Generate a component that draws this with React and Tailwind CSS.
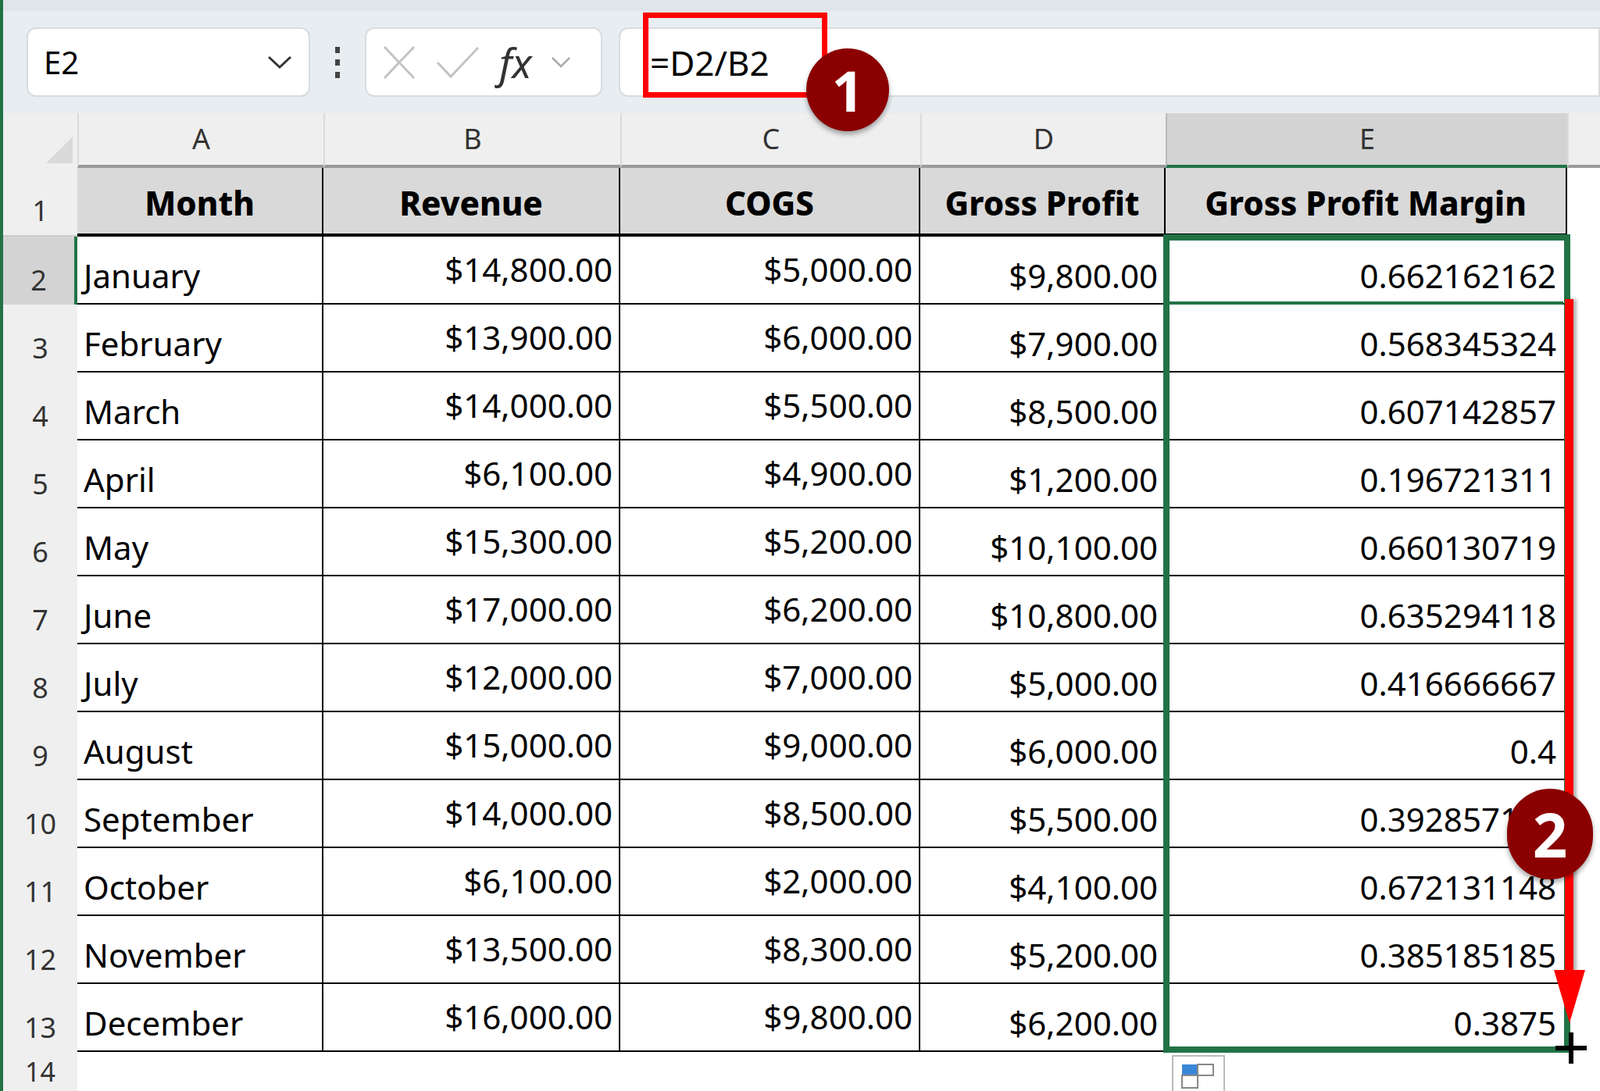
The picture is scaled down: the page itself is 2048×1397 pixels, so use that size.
const rows = [
  ["January", "$14,800.00", "$5,000.00", "$9,800.00", "0.662162162"],
  ["February", "$13,900.00", "$6,000.00", "$7,900.00", "0.568345324"],
  ["March", "$14,000.00", "$5,500.00", "$8,500.00", "0.607142857"],
  ["April", "$6,100.00", "$4,900.00", "$1,200.00", "0.196721311"],
  ["May", "$15,300.00", "$5,200.00", "$10,100.00", "0.660130719"],
  ["June", "$17,000.00", "$6,200.00", "$10,800.00", "0.635294118"],
  ["July", "$12,000.00", "$7,000.00", "$5,000.00", "0.416666667"],
  ["August", "$15,000.00", "$9,000.00", "$6,000.00", "0.4"],
  ["September", "$14,000.00", "$8,500.00", "$5,500.00", "0.392857143"],
  ["October", "$6,100.00", "$2,000.00", "$4,100.00", "0.672131148"],
  ["November", "$13,500.00", "$8,300.00", "$5,200.00", "0.385185185"],
  ["December", "$16,000.00", "$9,800.00", "$6,200.00", "0.3875"],
];

const cols = "grid grid-cols-[95px_315px_380px_384px_314px_514px_46px]";

export default function App() {
  return (
    <div className="relative w-[2048px] h-[1397px] overflow-hidden bg-white font-['Open_Sans',sans-serif] text-black border-l-4 border-[#217346]">
      {/* formula bar */}
      <div className="h-[145px] bg-[#e8edf1] border-t-[14px] border-[#dfe5ea] flex items-center pl-[30px]">
        <div className="w-[363px] h-[89px] bg-white rounded-xl border-2 border-[#d8dcdf] flex items-center justify-between px-5">
          <span className="text-[40px] font-['Liberation_Sans',sans-serif]">E2</span>
          <svg width="34" height="20" viewBox="0 0 34 20"><path d="M3 3 L17 16 L31 3" fill="none" stroke="#333" strokeWidth="3" /></svg>
        </div>
        <div className="w-[8px] mx-[31px] flex flex-col gap-2 items-center">
          <span className="w-[6px] h-[8px] bg-[#444]" />
          <span className="w-[6px] h-[8px] bg-[#444]" />
          <span className="w-[6px] h-[8px] bg-[#444]" />
        </div>
        <div className="w-[304px] h-[89px] bg-white rounded-xl border-2 border-[#d8dcdf] flex items-center gap-6 px-5">
          <svg width="44" height="46" viewBox="0 0 44 46"><path d="M3 3 L41 43 M41 3 L3 43" stroke="#c3c3c3" strokeWidth="3" /></svg>
          <svg width="58" height="44" viewBox="0 0 58 44"><path d="M3 22 L20 40 L55 3" fill="none" stroke="#c3c3c3" strokeWidth="3" /></svg>
          <span className="text-[52px] italic font-['Liberation_Serif',serif] text-[#333] leading-none">fx</span>
          <svg width="26" height="16" viewBox="0 0 26 16"><path d="M2 2 L13 13 L24 2" fill="none" stroke="#aaa" strokeWidth="2.5" /></svg>
        </div>
        <div className="flex-1 ml-[21px] h-[89px] bg-white rounded-l-xl border-2 border-[#d8dcdf] flex items-center pl-[38px]">
          <span className="text-[44px] font-['Liberation_Sans',sans-serif]">=D2/B2</span>
        </div>
      </div>

      {/* column headers */}
      <div className={`${cols} h-[70px] bg-[#efefef] text-[36px] text-[#333]`}>
        <div className="flex items-end justify-end p-1">
          <svg width="40" height="40" viewBox="0 0 40 40"><path d="M38 4 L38 38 L4 38 Z" fill="#d9d9d9" /></svg>
        </div>
        {["A", "B", "C", "D"].map((c) => (
          <div key={c} className="flex items-center justify-center border-l-2 border-[#dadada] border-b-4 border-b-[#9a9a9a]">{c}</div>
        ))}
        <div className="flex items-center justify-center bg-[#d3d3d3] border-l-2 border-[#bbb] border-b-4 border-b-[#217346]">E</div>
        <div className="border-l-2 border-[#dadada] border-b-4 border-b-[#9a9a9a]" />
      </div>

      {/* header row */}
      <div className={`${cols} h-[88px] text-[42px]`}>
        <div className="bg-[#efefef] flex items-end justify-center pb-1 text-[36px] text-[#333] border-b-2 border-[#ccc]">1</div>
        {["Month", "Revenue", "COGS", "Gross Profit", "Gross Profit Margin"].map((h) => (
          <div key={h} className="bg-[#d9d9d9] border-r-2 border-black border-b-4 flex items-end justify-center pb-2 font-extrabold whitespace-nowrap">{h}</div>
        ))}
        <div />
      </div>

      {/* data rows */}
      {rows.map((r, i) => (
        <div key={i} className={`${cols} h-[87px] text-[42px]`}>
          <div className={`flex items-end justify-center pb-1 text-[36px] text-[#333] ${i === 0 ? "bg-[#d3d3d3] border-r-4 border-[#217346]" : "bg-[#efefef]"}`}>{i + 2}</div>
          <div className="border-r-2 border-b-2 border-black flex items-end pl-2 pb-1">{r[0]}</div>
          {r.slice(1).map((v, j) => (
            <div key={j} className={`border-r-2 border-b-2 border-black flex items-end justify-end pr-2 ${j === 3 ? "pr-3" : ""} ${j === 2 || j === 3 ? "pb-1" : "pb-3"}`}>{v}</div>
          ))}
          <div />
        </div>
      ))}

      {/* row 14 */}
      <div className={`${cols} h-[60px]`}>
        <div className="bg-[#efefef] flex items-start justify-center pt-1 text-[34px] leading-tight text-[#333]">14</div>
      </div>

      {/* selection border */}
      <div className="absolute left-[1485px] top-[300px] w-[521px] h-[1048px] border-[8px] border-[#217346]" />
      <div className="absolute left-[1489px] top-[386px] w-[508px] h-[4px] bg-[#217346]" />
      {/* quick analysis icon */}
      <div className="absolute left-[1496px] top-[1351px] w-[68px] h-[50px] border-2 border-[#bbb] bg-white flex items-start justify-center pt-2">
        <svg width="46" height="36" viewBox="0 0 46 36"><rect x="2" y="2" width="20" height="14" fill="#3a86d6" /><rect x="22" y="2" width="20" height="14" fill="none" stroke="#888" strokeWidth="2" /><rect x="2" y="16" width="20" height="16" fill="none" stroke="#888" strokeWidth="2" /></svg>
      </div>
      {/* fill handle cursor */}
      <svg className="absolute left-[1985px] top-[1320px]" width="44" height="44" viewBox="0 0 44 44"><path d="M22 2 V42 M2 22 H42" stroke="#000" strokeWidth="6" /></svg>

      {/* annotation 1 */}
      <div className="absolute left-[819px] top-[16px] w-[236px] h-[109px] border-[7px] border-[#ff0000]" />
      <div className="absolute left-[1028px] top-[62px] w-[106px] h-[106px] rounded-full bg-[#8b0000] flex items-center justify-center text-white text-[72px] font-bold font-['Liberation_Sans',sans-serif] shadow-[0_4px_6px_rgba(0,0,0,0.35)]">1</div>

      {/* red arrow */}
      <div className="absolute left-[1999px] top-[383px] w-[11px] h-[862px] bg-[#ff0000] shadow-[4px_0_4px_rgba(0,0,0,0.3)]" />
      <svg className="absolute left-[1983px] top-[1240px]" width="44" height="72" viewBox="0 0 44 72"><path d="M2 2 H42 L22 70 Z" fill="#ff0000" /></svg>

      {/* annotation 2 */}
      <div className="absolute left-[1925px] top-[1010px] w-[110px] h-[116px] rounded-full bg-[#8b0000] flex items-center justify-center text-white text-[78px] font-bold font-['Liberation_Sans',sans-serif] shadow-[0_4px_6px_rgba(0,0,0,0.35)]">2</div>
    </div>
  );
}
